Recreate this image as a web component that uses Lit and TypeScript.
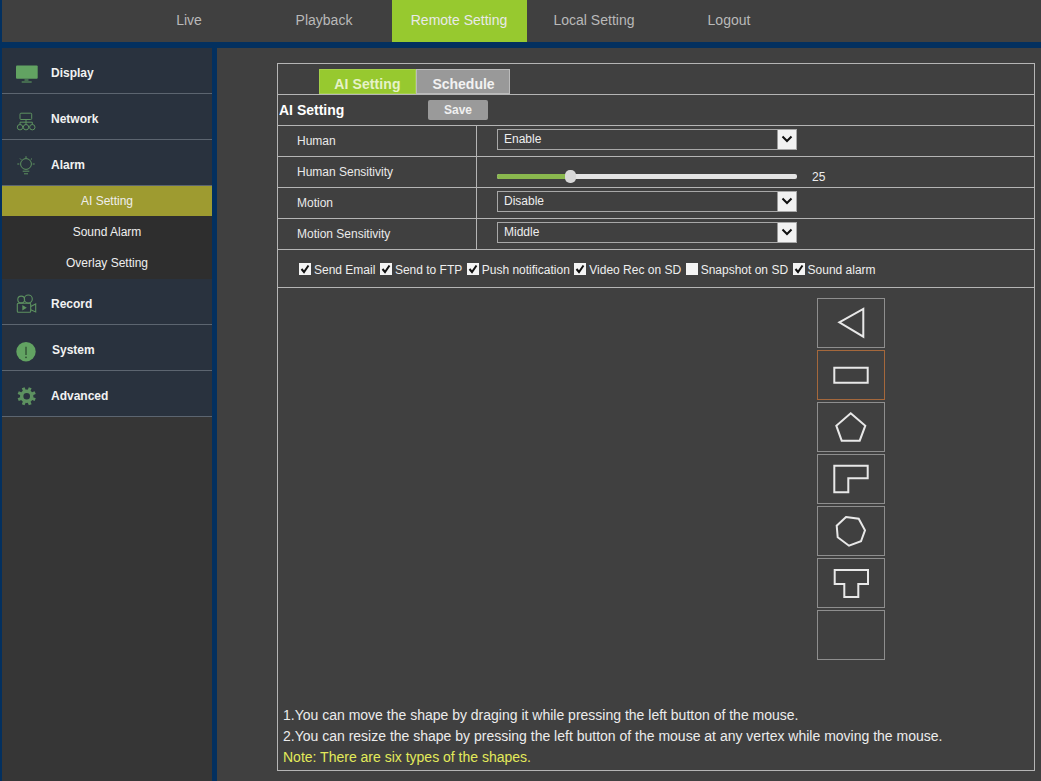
import { LitElement, html, css, svg } from "lit";
import { customElement } from "lit/decorators.js";

const G = "#5d9160";
const gearTeeth = Array.from({ length: 8 }, (_, i) => {
  const a = (i * Math.PI) / 4 + Math.PI / 8;
  const c = [15.7 + Math.cos(a) * 5.8, 14.2 + Math.sin(a) * 5.8, 15.7 + Math.cos(a) * 9.2, 14.2 + Math.sin(a) * 9.2];
  return `M${c[0].toFixed(2)} ${c[1].toFixed(2)}L${c[2].toFixed(2)} ${c[3].toFixed(2)}`;
}).join("");

const icons: Record<string, unknown> = {
  display: svg`<rect x="5" y="6.500" width="21.700" height="13.300" rx="1" fill="#62a362"/><path d="M13.500 21h4M10.700 23h10" stroke="#62a362" stroke-width="1"/>`,
  network: svg`<g fill="none" stroke="${G}" stroke-width="1"><rect x="9" y="8.200" width="11.700" height="6.300" rx="1"/><path d="M15 14.500v5M9 19.500v-2.300h12.300v2.300"/><circle cx="9" cy="22.200" r="2.700"/><circle cx="15" cy="22.200" r="2.700"/><circle cx="21.300" cy="22.200" r="2.700"/></g>`,
  alarm: svg`<g fill="none" stroke="${G}" stroke-width="1"><circle cx="15" cy="13" r="5.400"/><path d="M11.700 20.200h6.600M13 22.800h4M15 5.200v2M6.300 13h2M21.700 13h2M9 7.500l1.300 1.300M21 7.500l-1.300 1.300"/></g>`,
  record: svg`<g fill="none" stroke="${G}" stroke-width="1.100"><circle cx="10.200" cy="9.500" r="3.400"/><circle cx="17.300" cy="9" r="4"/><rect x="6.300" y="13.200" width="13.400" height="9" rx="1"/><path d="M19.700 16.500l5-2.500v8l-5-2.300"/></g><path d="M11.300 15l4.500 2.700-4.500 2.700z" fill="${G}"/>`,
  system: svg`<circle cx="15" cy="15.700" r="9.700" fill="#62a362"/><path d="M15 10.700v8.300" stroke="#2f4d32" stroke-width="1.300"/><circle cx="15" cy="21.300" r=".9" fill="#2f4d32"/>`,
  advanced: svg`<circle cx="15.700" cy="14.200" r="5" fill="none" stroke="${G}" stroke-width="3.400"/><path d="${gearTeeth}" fill="none" stroke="${G}" stroke-width="3"/>`,
};

const shapes = [
  "22.300,24.300 46.300,11 46.300,38.700",
  "17.300,17.700 50.700,17.700 50.700,32.700 17.300,32.700",
  "33.700,11.300 48.300,23.700 42.700,38.700 24.700,38.700 19.300,23.700",
  "17.300,11.700 50.700,11.700 50.700,24.300 31.300,24.300 31.300,38.300 17.300,38.300",
  "29,11 41.700,12.700 48,24.300 44,35.300 32,39.700 20.700,31.300 19.700,19.700",
  "17.700,12 51,12 51,26 41.300,26 41.300,39 27.300,39 27.300,26 17.700,26",
  "",
];

const checks: [string, boolean][] = [
  ["Send Email", true],
  ["Send to FTP", true],
  ["Push notification", true],
  ["Video Rec on SD", true],
  ["Snapshot on SD", false],
  ["Sound alarm", true],
];

@customElement("app-root")
export class AppRoot extends LitElement {
  static styles = css`
    :host {
      display: block;
      width: 1041px;
      height: 781px;
      overflow: hidden;
      background: #03305f;
      font-family: "Liberation Sans", Arial, sans-serif;
      color: #fff;
      font-size: 12px;
    }
    .top {
      margin-left: 2px;
      height: 42px;
      background: #404040;
      display: flex;
      padding-left: 120px;
      margin-bottom: 6px;
    }
    .top a {
      width: 135px;
      text-align: center;
      font-size: 14px;
      line-height: 40px;
      color: #b9b9b9;
      text-indent: -1px;
    }
    .top a.on {
      background: #97c92f;
      color: #e9e9e9;
    }
    .body {
      display: flex;
      height: 733px;
      padding-left: 2px;
    }
    .side {
      width: 210px;
      margin-right: 5px;
      background: #363636;
      flex: none;
    }
    .item {
      box-sizing: border-box;
      height: 46px;
      padding-top: 5px;
      border-bottom: 1px solid #5c6570;
      background: #29323e;
      display: flex;
      align-items: center;
      font-weight: bold;
      color: #f2f2f2;
    }
    .item svg {
      width: 30px;
      height: 28px;
      margin-left: 9px;
      margin-right: 10px;
      flex: none;
    }
    .item.system span {
      margin-left: 1px;
    }
    .sub {
      height: 31px;
      display: flex;
      align-items: center;
      justify-content: center;
      background: #2e2e2e;
      color: #eee;
    }
    .sub.on {
      background: #9e9b30;
      height: 30px;
    }
    .sub.last {
      height: 32px;
      padding-bottom: 1px;
      box-sizing: border-box;
    }
    .main {
      flex: 1;
      background: #404040;
      padding: 15px 6px 10px 60px;
    }
    .box {
      height: 708px;
      box-sizing: border-box;
      border: 1px solid #b5b5b5;
      display: flex;
      flex-direction: column;
    }
    .row {
      height: 30px;
      border-bottom: 1px solid #b5b5b5;
      display: flex;
      align-items: center;
      flex: none;
    }
    .tabs {
      align-items: flex-end;
      padding-left: 41px;
    }
    .tab {
      box-sizing: border-box;
      height: 25px;
      font-size: 14px;
      font-weight: bold;
      text-align: center;
      line-height: 28px;
      overflow: hidden;
    }
    .tab.a {
      width: 97px;
      background: #97c92f;
      color: #e6f2c8;
      border: 1px solid #a5d14a;
      letter-spacing: 0.1px;
    }
    .tab.b {
      width: 94px;
      background: #999;
      color: #f2f2f2;
      border: 1px solid #bbb;
      text-indent: 1px;
    }
    .title {
      font-size: 14px;
      font-weight: bold;
      margin-left: 1px;
      width: 149px;
    }
    .save {
      width: 60px;
      height: 20px;
      background: #9a9a9a;
      border-radius: 2px;
      color: #f0f0f0;
      font-weight: bold;
      text-align: center;
      line-height: 20px;
    }
    .label {
      box-sizing: border-box;
      width: 199px;
      height: 100%;
      padding: 0 0 1px 19px;
      border-right: 1px solid #b5b5b5;
      display: flex;
      align-items: center;
      color: #eaeaea;
    }
    .value {
      padding-left: 20px;
      display: flex;
      align-items: center;
      height: 100%;
    }
    .select {
      position: relative;
      box-sizing: border-box;
      width: 300px;
      height: 21px;
      border: 1px solid #a8a8a8;
      margin-top: -4px;
      padding-left: 6px;
      line-height: 18px;
      color: #eee;
    }
    .arrow {
      position: absolute;
      right: 0;
      top: 0;
      width: 18px;
      height: 19px;
      background: #f2f2f2;
      border-left: 1px solid #999;
      display: flex;
      align-items: center;
      justify-content: center;
    }
    .slider {
      position: relative;
      width: 300px;
      height: 5px;
      margin-top: 9px;
      border-radius: 2px;
      background: #e4e4e4;
    }
    .fill {
      height: 100%;
      background: #8ab84e;
      border-radius: 2px 0 0 2px;
    }
    .thumb {
      position: absolute;
      top: -4px;
      width: 11px;
      height: 13px;
      margin-left: -5px;
      border-radius: 5px;
      background: #d8d8d8;
    }
    .num {
      margin: 9px 0 0 15px;
      color: #eee;
    }
    .checks {
      padding: 3px 0 0 21px;
      box-sizing: border-box;
      height: 38px;
    }
    .chk {
      display: flex;
      align-items: center;
      margin-right: 4.500px;
      color: #eee;
    }
    .cb {
      width: 12px;
      height: 12px;
      background: #f4f4f4;
      margin: -3px 3px 0 0;
      display: flex;
      flex: none;
    }
    .cb svg {
      width: 12px;
      height: 12px;
    }
    .canvas {
      flex: 1;
      display: flex;
      flex-direction: column;
      padding: 10px 0 2px 5px;
      min-height: 0;
    }
    .shapes {
      display: flex;
      flex-direction: column;
      gap: 2px;
      margin-left: 534px;
    }
    .shape {
      box-sizing: border-box;
      width: 68px;
      height: 50px;
      border: 1px solid #8e8e8e;
    }
    .shape.sel {
      border-color: #a5683c;
    }
    .shape svg {
      display: block;
      margin: -1px;
      width: 68px;
      height: 50px;
    }
    .notes {
      margin-top: auto;
      font-size: 14px;
      line-height: 21px;
      color: #ececec;
    }
    .note {
      color: #e3ea5a;
    }
  `;

  private sel(text: string) {
    return html`<div class="select">
      ${text}
      <span class="arrow"
        ><svg width="12" height="8" viewBox="0 0 12 8">
          <path d="M1.500 1.500L6 6l4.500-4.500" fill="none" stroke="#111" stroke-width="2" /></svg
      ></span>
    </div>`;
  }

  private navItem(icon: string, label: string) {
    return html`<div class="item ${icon}">
      <svg viewBox="0 0 30 28">${icons[icon]}</svg><span>${label}</span>
    </div>`;
  }

  render() {
    return html`
      <div class="top">
        <a>Live</a><a>Playback</a><a class="on">Remote Setting</a><a>Local Setting</a><a>Logout</a>
      </div>
      <div class="body">
        <div class="side">
          ${this.navItem("display", "Display")} ${this.navItem("network", "Network")}
          ${this.navItem("alarm", "Alarm")}
          <div class="sub on">AI Setting</div>
          <div class="sub">Sound Alarm</div>
          <div class="sub last">Overlay Setting</div>
          ${this.navItem("record", "Record")} ${this.navItem("system", "System")}
          ${this.navItem("advanced", "Advanced")}
        </div>
        <div class="main">
          <div class="box">
            <div class="row tabs">
              <div class="tab a">AI Setting</div>
              <div class="tab b">Schedule</div>
            </div>
            <div class="row">
              <div class="title">AI Setting</div>
              <div class="save">Save</div>
            </div>
            <div class="row">
              <div class="label">Human</div>
              <div class="value">${this.sel("Enable")}</div>
            </div>
            <div class="row">
              <div class="label">Human Sensitivity</div>
              <div class="value">
                <div class="slider">
                  <div class="fill" style="width:${(73 / 300) * 100}%"></div>
                  <div class="thumb" style="left:${(73 / 300) * 100}%"></div>
                </div>
                <span class="num">25</span>
              </div>
            </div>
            <div class="row">
              <div class="label">Motion</div>
              <div class="value">${this.sel("Disable")}</div>
            </div>
            <div class="row">
              <div class="label">Motion Sensitivity</div>
              <div class="value">${this.sel("Middle")}</div>
            </div>
            <div class="row checks">
              ${checks.map(
                ([t, on]) => html`<label class="chk"
                  ><span class="cb"
                    >${on
                      ? html`<svg viewBox="0 0 12 12">
                          <path d="M2.500 6l2.500 3L9.500 2.500" fill="none" stroke="#111" stroke-width="2" />
                        </svg>`
                      : ""}</span
                  >${t}</label
                >`,
              )}
            </div>
            <div class="canvas">
              <div class="shapes">
                ${shapes.map(
                  (p, i) => html`<div class="shape ${i === 1 ? "sel" : ""}">
                    ${p
                      ? html`<svg viewBox="0 0 68 50">
                          ${svg`<polygon points="${p}" fill="none" stroke="#e8e8e8" stroke-width="2" />`}
                        </svg>`
                      : ""}
                  </div>`,
                )}
              </div>
              <div class="notes">
                <div>1.You can move the shape by draging it while pressing the left button of the mouse.</div>
                <div>2.You can resize the shape by pressing the left button of the mouse at any vertex while moving the mouse.</div>
                <div class="note">Note: There are six types of the shapes.</div>
              </div>
            </div>
          </div>
        </div>
      </div>
    `;
  }
}
